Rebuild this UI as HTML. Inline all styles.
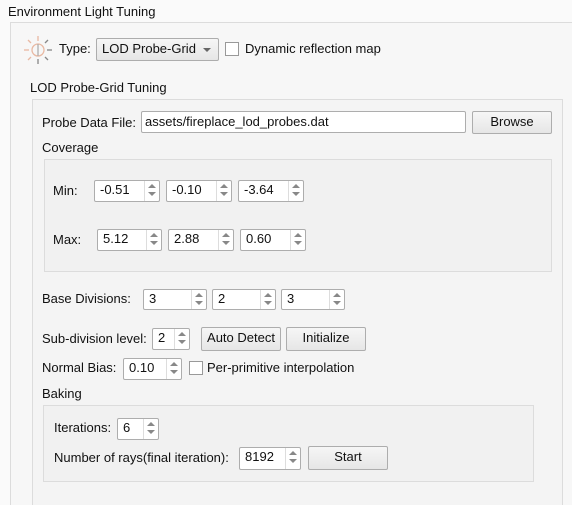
<!DOCTYPE html>
<html style="overflow:hidden;height:505px"><head><meta charset="utf-8"><style>
body{margin:0;width:572px;height:505px;overflow:hidden;background:#fafafa;font-family:"Liberation Sans","Noto Sans CJK SC",sans-serif;font-size:13px;color:#111;position:relative}
.a{position:absolute}
.t{position:absolute;line-height:16px;white-space:nowrap}
.box{position:absolute;border:1px solid #dcdcdc;box-sizing:border-box}
.sp{position:absolute;background:#fff;border:1px solid #adadad;border-radius:2px;height:20px;box-sizing:border-box}
.sp span{position:absolute;left:5px;top:1px;line-height:16px}
.sp i{position:absolute;right:0;top:0;width:14px;height:18px;border-left:1px solid #ddd}
.sp i:before{content:"";position:absolute;left:3px;top:3px;border:4px solid transparent;border-bottom:4px solid #888;border-top:0}
.sp i:after{content:"";position:absolute;left:3px;top:11px;border:4px solid transparent;border-top:4px solid #888;border-bottom:0}
.btn{position:absolute;background:linear-gradient(#f6f6f6,#e6e6e6);border:1px solid #adadad;border-radius:2px;box-sizing:border-box;text-align:center;line-height:20px}
.cb{position:absolute;width:14px;height:14px;background:#fff;border:1px solid #999;box-sizing:border-box}
</style></head><body>
<div class="t" style="left:8px;top:4px">Environment Light Tuning</div>
<div class="box" style="left:10px;top:22px;width:570px;height:490px;background:#f7f7f7"></div>
<svg class="a" style="left:22px;top:34px" width="32" height="32" viewBox="0 0 32 32">
<circle cx="16" cy="16" r="6" fill="none" stroke="#e9b9a3" stroke-width="1.3"/>
<line x1="16" y1="10" x2="16" y2="22" stroke="#aaa" stroke-width="1.2"/>
<g stroke="#e9b9a3" stroke-width="1.3"><line x1="16" y1="2" x2="16" y2="7"/><line x1="2" y1="16" x2="7" y2="16"/><line x1="6" y1="6" x2="9" y2="9"/><line x1="6" y1="26" x2="9" y2="23"/></g>
<g stroke="#888" stroke-width="1.3"><line x1="16" y1="25" x2="16" y2="30"/><line x1="25" y1="16" x2="30" y2="16"/><line x1="26" y1="6" x2="23" y2="9"/><line x1="26" y1="26" x2="23" y2="23"/></g>
</svg>
<div class="t" style="left:59px;top:41px">Type:</div>
<div class="btn" style="left:96px;top:38px;width:123px;height:23px;text-align:left;padding-left:5px">LOD Probe-Grid<span class="a" style="right:7px;top:9px;border:4px solid transparent;border-top:4px solid #666;border-bottom:0"></span></div>
<div class="cb" style="left:225px;top:42px"></div>
<div class="t" style="left:245px;top:41px">Dynamic reflection map</div>
<div class="t" style="left:30px;top:80px">LOD Probe-Grid Tuning</div>
<div class="box" style="left:32px;top:99px;width:531px;height:420px;background:#f4f4f4"></div>
<div class="t" style="left:42px;top:115px">Probe Data File:</div>
<div class="sp" style="left:141px;top:111px;width:325px;height:22px"><span style="left:3px;top:2px">assets/fireplace_lod_probes.dat</span></div>
<div class="btn" style="left:472px;top:111px;width:80px;height:23px">Browse</div>
<div class="t" style="left:42px;top:140px">Coverage</div>
<div class="box" style="left:44px;top:159px;width:508px;height:113px;background:#f1f1f1"></div>
<div class="t" style="left:53px;top:183px">Min:</div>
<div class="sp" style="left:94px;top:180px;width:66px;height:22px"><span>-0.51</span><i style="height:20px"></i></div>
<div class="sp" style="left:166px;top:180px;width:66px;height:22px"><span>-0.10</span><i style="height:20px"></i></div>
<div class="sp" style="left:238px;top:180px;width:66px;height:22px"><span>-3.64</span><i style="height:20px"></i></div>
<div class="t" style="left:53px;top:232px">Max:</div>
<div class="sp" style="left:97px;top:229px;width:65px;height:22px"><span>5.12</span><i style="height:20px"></i></div>
<div class="sp" style="left:168px;top:229px;width:66px;height:22px"><span>2.88</span><i style="height:20px"></i></div>
<div class="sp" style="left:240px;top:229px;width:66px;height:22px"><span>0.60</span><i style="height:20px"></i></div>
<div class="t" style="left:42px;top:291px">Base Divisions:</div>
<div class="sp" style="left:143px;top:289px;width:64px;height:21px"><span>3</span><i style="height:19px"></i></div>
<div class="sp" style="left:212px;top:289px;width:64px;height:21px"><span>2</span><i style="height:19px"></i></div>
<div class="sp" style="left:281px;top:289px;width:64px;height:21px"><span>3</span><i style="height:19px"></i></div>
<div class="t" style="left:42px;top:331px">Sub-division level:</div>
<div class="sp" style="left:152px;top:328px;width:38px;height:22px"><span>2</span><i style="height:20px"></i></div>
<div class="btn" style="left:201px;top:327px;width:80px;height:24px">Auto Detect</div>
<div class="btn" style="left:286px;top:327px;width:80px;height:24px">Initialize</div>
<div class="t" style="left:42px;top:360px">Normal Bias:</div>
<div class="sp" style="left:123px;top:358px;width:59px;height:22px"><span>0.10</span><i style="height:20px"></i></div>
<div class="cb" style="left:189px;top:361px"></div>
<div class="t" style="left:207px;top:360px">Per-primitive interpolation</div>
<div class="t" style="left:42px;top:386px">Baking</div>
<div class="box" style="left:43px;top:405px;width:491px;height:77px;background:#f1f1f1"></div>
<div class="t" style="left:54px;top:420px">Iterations:</div>
<div class="sp" style="left:117px;top:418px;width:42px;height:22px"><span>6</span><i style="height:20px"></i></div>
<div class="t" style="left:54px;top:450px">Number of rays(final iteration):</div>
<div class="sp" style="left:239px;top:447px;width:62px;height:23px"><span>8192</span><i style="height:21px"></i></div>
<div class="btn" style="left:308px;top:446px;width:80px;height:24px">Start</div>
</body></html>
